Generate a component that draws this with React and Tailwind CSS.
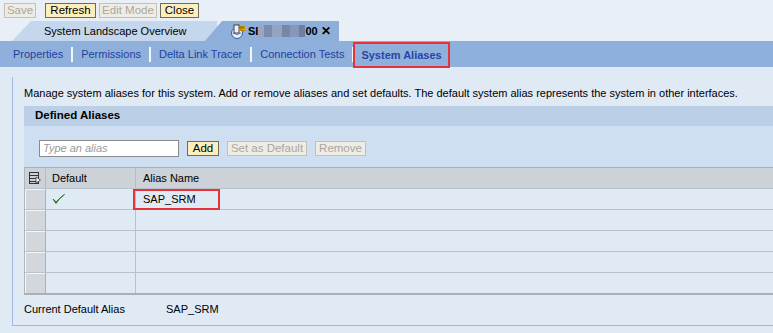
import React from 'react'

// toolbar buttons: enabled ones are yellow, disabled are greyed out
function ToolButton({ label, disabled, w }) {
  return (
    <div
      className={`flex h-[15px] items-center justify-center border text-[11.5px] leading-none ${w} ${
        disabled
          ? 'border-[#c4c0b4] bg-[#efece4] text-[#a9a7a2]'
          : 'border-[#6d6a5e] bg-[#fcefbd] text-black'
      }`}
    >
      {label}
    </div>
  )
}

function PlugIcon() {
  return (
    <svg width="17" height="16" viewBox="0 0 17 16">
      <circle cx="7" cy="10" r="5.5" fill="#e8eefa" stroke="#3b55a6" strokeWidth="1" />
      <path d="M3 10 Q7 13 11 10" fill="none" stroke="#3b55a6" strokeWidth="0.8" />
      <rect x="4" y="2" width="5" height="8" fill="#f3f3f3" stroke="#444" strokeWidth="1" />
      <path d="M9 3.5h6M9 5.5h6M9 7.5h6" stroke="#b8860b" strokeWidth="1.2" />
      <path d="M9 4.5h5" stroke="#d33" strokeWidth="0.8" />
    </svg>
  )
}

function Check() {
  return (
    <svg width="13" height="11" viewBox="0 0 13 11">
      <path d="M1 5 L4 9.5 Q7 4 12.5 0.5 Q7.5 4 4.2 8 Z" fill="#4a9a2a" stroke="#2f7a1a" strokeWidth="1" strokeLinejoin="round" />
    </svg>
  )
}

function ColumnsIcon() {
  return (
    <svg width="12" height="12" viewBox="0 0 12 12">
      <rect x="0.5" y="0.5" width="9" height="11" fill="none" stroke="#333" />
      <path d="M0.5 3.5h9M0.5 6.5h6M0.5 9.5h9" stroke="#333" />
      <path d="M7 5 L11.5 8 L7 11 Z" fill="#fff" stroke="#333" strokeWidth="0.8" />
    </svg>
  )
}

const navItems = ['Properties', 'Permissions', 'Delta Link Tracer', 'Connection Tests']

export default function App() {
  const rows = [true, false, false, false, false]

  return (
    <div className="h-[333px] w-[773px] overflow-hidden bg-[#dfeaf5] font-['Liberation_Sans',Arial,sans-serif] text-[11px] text-black">
      {/* top strip: toolbar + tabs */}
      <div className="bg-[#e8eff7]">
        <div className="flex h-[21px] items-start pl-[4px] pt-[3px]">
          <ToolButton label="Save" disabled w="w-[32px]" />
          <div className="ml-[9px]"><ToolButton label="Refresh" w="w-[51px]" /></div>
          <div className="ml-[3px]"><ToolButton label="Edit Mode" disabled w="w-[58px]" /></div>
          <div className="ml-[3px]"><ToolButton label="Close" w="w-[39px]" /></div>
        </div>
        <div className="flex h-[20px]">
          <div className="ml-[12px] flex w-[205px] items-center bg-[#c4d7ec] pl-[32px] [clip-path:polygon(19px_0,100%_0,100%_100%,0_100%)]">
            System Landscape Overview
          </div>
          <div className="-ml-[12px] flex w-[134px] items-center bg-[#8eafd9] pl-[25px] [clip-path:polygon(17px_0,100%_0,100%_100%,0_100%)]">
            <PlugIcon />
            <span className="ml-[1px] font-bold">SI</span>
            <span className="flex h-[12px]">
              <span className="w-[6px] bg-[#9aa7c3]" />
              <span className="w-[8px] bg-[#7d8bad]" />
              <span className="w-[10px] bg-[#95a3c2]" />
              <span className="w-[8px] bg-[#7886aa]" />
              <span className="w-[9px] bg-[#8897b8]" />
              <span className="w-[6px] bg-[#6f7ea3]" />
            </span>
            <span className="font-bold">00</span>
            <span className="ml-[3px] text-[12px] font-bold">✕</span>
          </div>
        </div>
      </div>

      {/* nav bar */}
      <div className="flex h-[26px] items-center bg-[#8eb0da] pl-[13px] text-[#2440a0]">
        {navItems.map((n) => (
          <React.Fragment key={n}>
            <span>{n}</span>
            <span className="mx-[8px] h-[15px] w-[2px] bg-[#f2f6fb]" />
          </React.Fragment>
        ))}
        <span className="-ml-[9px] flex h-[26px] translate-y-[1px] items-center border-2 border-[#e8323a] px-[6px] font-bold text-[#2a45a8]">
          System Aliases
        </span>
      </div>

      {/* content panel */}
      <div className="ml-[12px] mt-[10px] h-[249px] border-b border-l border-[#9fbadb] pl-[11px]">
        <div className="pt-[9px] leading-[14px]">
          Manage system aliases for this system. Add or remove aliases and set defaults. The default system alias represents the system in other interfaces.
        </div>

        <div className="mt-[6px] flex h-[20px] items-center bg-[#bbd0e6] pl-[11px] text-[11.5px] font-bold">
          Defined Aliases
        </div>
        <div className="flex h-[41px] items-center gap-[8px] bg-[#cddff0] pl-[15px] pt-[4px]">
          <div className="flex h-[17px] w-[140px] items-center border border-[#8a8a8a] bg-white pl-[3px] italic text-[#9a9a9a]">
            Type an alias
          </div>
          <ToolButton label="Add" w="w-[32px]" />
          <ToolButton label="Set as Default" disabled w="w-[80px]" />
          <ToolButton label="Remove" disabled w="w-[51px]" />
        </div>

        {/* table */}
        <div className="border-b-2 border-l border-t border-[#aab0b6] border-l-[#b0b6bc]">
          <div className="flex h-[20px] bg-[#ccd2d7]">
            <div className="flex w-[21px] items-center justify-center border-r border-[#b5bcc3]">
              <ColumnsIcon />
            </div>
            <div className="flex w-[90px] items-center border-r border-[#b5bcc3] pl-[6px]">Default</div>
            <div className="flex flex-1 items-center pl-[7px]">Alias Name</div>
          </div>
          {rows.map((d, i) => (
            <div key={i} className="flex h-[21px] border-t border-[#b8c2cc]">
              <div className="w-[21px] border-r border-[#aab0b6] bg-[#d3d7db] shadow-[inset_1px_1px_0_#f4f6f8]" />
              <div className="flex w-[90px] items-center border-r border-[#b8c2cc] pl-[6px]">
                {d && <Check />}
              </div>
              <div className="flex flex-1 items-center">
                {d && (
                  <span className="-ml-[3px] flex h-[21px] w-[87px] items-center border-2 border-[#e8323a] pl-[8px]">
                    SAP_SRM
                  </span>
                )}
              </div>
            </div>
          ))}
        </div>

        <div className="flex pt-[6px]">
          <span className="w-[142px]">Current Default Alias</span>
          <span>SAP_SRM</span>
        </div>
      </div>
    </div>
  )
}
